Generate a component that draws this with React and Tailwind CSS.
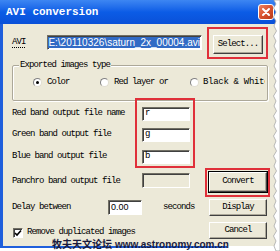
import React from 'react';

const mono = "font-['Liberation_Mono',monospace] text-[9px] tracking-[-0.9px] text-black whitespace-nowrap";
const sunken = "border border-t-[#716f64] border-l-[#716f64] border-b-white border-r-white shadow-[inset_1px_1px_0_#404040]";
const raised = "bg-[#ece9d8] border border-t-white border-l-white border-b-[#404040] border-r-[#404040] shadow-[inset_-1px_-1px_0_#aca899]";

function Radio({ checked }) {
  return (
    <div className="w-[9px] h-[9px] rounded-full bg-white border border-t-[#808080] border-l-[#808080] border-b-[#e0ddd0] border-r-[#e0ddd0] flex items-center justify-center shrink-0">
      {checked && <div className="w-[3px] h-[3px] rounded-full bg-black" />}
    </div>
  );
}

function Field({ value, disabled }) {
  return (
    <div className={`w-[48px] h-full flex items-center pl-[2px] ${sunken} ${disabled ? 'bg-[#ece9d8]' : 'bg-white'}`}>
      <span className={mono}>{value}</span>
    </div>
  );
}

export default function App() {
  return (
    <div className="relative w-[280px] h-[251px] bg-white overflow-hidden">
      {/* Title bar */}
      <div className="h-[24px] w-[276px] flex items-center pl-[6px] pr-[2px] bg-gradient-to-b from-[#3d86f2] via-[#0b5ce6] to-[#0a50d8]">
        <span className="font-['Liberation_Mono',monospace] text-[11px] font-bold text-white whitespace-nowrap">AVI conversion</span>
        <div className="ml-auto w-[16px] h-[16px] rounded-[3px] border border-white bg-gradient-to-br from-[#ec8060] via-[#d9522f] to-[#b83a1a] flex items-center justify-center">
          <svg width="10" height="10" viewBox="0 0 10 10">
            <path d="M2 2 L8 8 M8 2 L2 8" stroke="white" strokeWidth="2" strokeLinecap="round" />
          </svg>
        </div>
      </div>

      <div className="flex w-[276px]">
        <div className="w-[3px] h-[224px] bg-[#1f5fdc]" />
        <div className="flex flex-col">
          {/* Body */}
          <div className="w-[273px] h-[222px] bg-[#ece9d8] pl-[9px] flex flex-col">
            {/* AVI row */}
            <div className="flex items-start pt-[11px]">
              <div className="w-[35px] h-[15px] flex items-center">
                <span className={`${mono} underline decoration-dotted underline-offset-[3px]`}>AVI</span>
              </div>
              <div className={`w-[155px] h-[15px] bg-white flex items-center justify-end overflow-hidden pr-[1px] ${sunken}`}>
                <span className="bg-[#316ac5] text-white font-['Liberation_Sans',sans-serif] text-[10px] leading-[11px] whitespace-nowrap">E:\20110326\saturn_2x_00004.avi</span>
              </div>
              <div className={`ml-[11px] w-[50px] h-[19px] flex items-center justify-center ${raised}`}>
                <span className={mono}>Select...</span>
              </div>
            </div>

            {/* Group box */}
            <div className="relative mt-[11px] w-[256px] h-[36px] border border-[#aca899] rounded-[2px] shadow-[inset_1px_1px_0_white,1px_1px_0_white]">
              <span className={`absolute -top-[7px] left-[6px] px-[1px] bg-[#ece9d8] ${mono}`}>Exported images type</span>
              <div className="flex items-center h-[11px] mt-[11px] pl-[20px]">
                <div className="w-[67px] flex items-center gap-[5px]">
                  <Radio checked />
                  <span className={mono}>Color</span>
                </div>
                <div className="w-[90px] flex items-center gap-[5px]">
                  <Radio />
                  <span className={mono}>Red layer or</span>
                </div>
                <div className="w-[75px] flex items-center gap-[4px] overflow-hidden">
                  <Radio />
                  <span className="font-['Liberation_Mono',monospace] text-[9px] tracking-[-0.3px] text-black whitespace-nowrap">Black &amp; White</span>
                </div>
              </div>
            </div>

            {/* Lower section */}
            <div className="flex">
              <div className="w-[196px] flex flex-col">
                <div className="flex items-center h-[14px] mt-[6px]">
                  <span className={`w-[130px] ${mono}`}>Red band output file name</span>
                  <Field value="r" />
                </div>
                <div className="flex items-center h-[14px] mt-[7px]">
                  <span className={`w-[130px] ${mono}`}>Green band output file</span>
                  <Field value="g" />
                </div>
                <div className="flex items-center h-[14px] mt-[8px]">
                  <span className={`w-[130px] ${mono}`}>Blue band output file</span>
                  <Field value="b" />
                </div>
                <div className="flex items-center h-[15px] mt-[9px]">
                  <span className={`w-[130px] ${mono} pt-[2px]`}>Panchro band output file</span>
                  <Field value="" disabled />
                </div>
                <div className="flex items-center h-[15px] mt-[12px]">
                  <span className={`w-[96px] ${mono}`}>Delay between</span>
                  <div className={`w-[34px] h-full bg-white flex items-center pl-[2px] ${sunken}`}>
                    <span className="font-['Liberation_Sans',sans-serif] text-[9px] text-black">0.00</span>
                  </div>
                  <span className={`ml-[21px] ${mono}`}>seconds</span>
                </div>
                <div className="flex items-center h-[10px] mt-[13px] pl-[1px]">
                  <div className={`w-[10px] h-[10px] bg-white flex items-center justify-center ${sunken}`}>
                    <svg width="8" height="8" viewBox="0 0 8 8">
                      <path d="M1 4 L3 6 L7 1.5" stroke="black" strokeWidth="1.6" fill="none" />
                    </svg>
                  </div>
                  <span className={`ml-[4px] ${mono}`}>Remove duplicated images</span>
                </div>
              </div>

              <div className="flex flex-col">
                <div className="mt-[70px] w-[60px] h-[22px] border border-black">
                  <div className={`w-full h-full flex items-center justify-center ${raised}`}>
                    <span className={mono}>Convert</span>
                  </div>
                </div>
                <div className={`mt-[6px] ml-[1px] w-[58px] h-[17px] flex items-center justify-center ${raised}`}>
                  <span className={mono}>Display</span>
                </div>
                <div className={`mt-[6px] ml-[1px] w-[58px] h-[17px] flex items-center justify-center ${raised}`}>
                  <span className={mono}>Cancel</span>
                </div>
              </div>
            </div>
          </div>
          <div className="w-[224px] h-[2px] bg-[#1f5fdc]" />
        </div>
      </div>

      {/* Red highlight boxes */}
      <div className="absolute left-[207px] top-[27px] w-[61px] h-[32px] border-2 border-[#e0303a]" />
      <div className="absolute left-[135px] top-[98px] w-[60px] h-[70px] border-2 border-[#e0303a]" />
      <div className="absolute left-[205px] top-[168px] w-[65px] h-[29px] border-2 border-[#e0303a]" />

      {/* Torn right edge */}
      <svg className="absolute left-[268px] top-0" width="12" height="251" viewBox="0 0 12 251">
        <path
          d="M12 0 L6 0 L8 4 L5.5 8 L8 12 L5.5 17 L8 21 L6 26 L8.5 31 L5.5 36 L8 41 L6 46 L8.5 51 L5.5 56 L8 61 L6 66 L8.5 71 L5.5 76 L8 81 L6 86 L8.5 91 L5.5 96 L8 101 L6 106 L8.5 111 L5.5 116 L8 121 L6 126 L8.5 131 L5.5 136 L8 141 L6 146 L8.5 151 L5.5 156 L8 161 L6 166 L8.5 171 L5.5 176 L8 181 L6 186 L8.5 191 L5.5 196 L8 201 L6 206 L8.5 211 L5.5 216 L8 221 L6 226 L8.5 231 L5.5 236 L8 241 L6 246 L8 251 L12 251 Z"
          fill="white"
          stroke="#a8a8a8"
          strokeWidth="0.8"
        />
      </svg>

      {/* Watermark */}
      <div className="absolute left-[52px] top-[238px] flex items-baseline whitespace-nowrap text-[#1a1a3c] font-bold">
        <span className="font-['Noto_Sans_CJK_SC',sans-serif] text-[10px] leading-[12px]">牧夫天文论坛</span>
        <span className="ml-[3px] font-['Liberation_Sans',sans-serif] text-[10px] leading-[12px]">www.astronomy.com.cn</span>
      </div>
    </div>
  );
}
